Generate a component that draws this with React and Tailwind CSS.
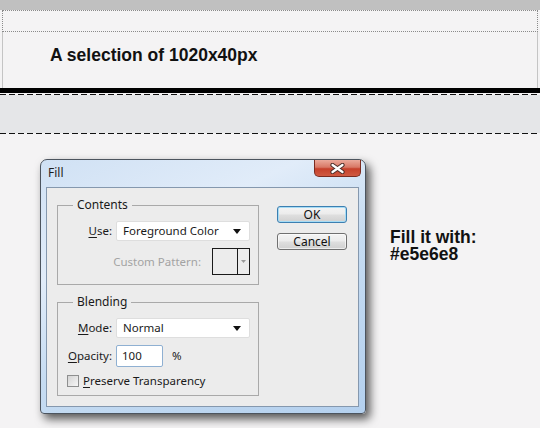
import React from "react";

function DashLine() {
  return <div className="h-[1px] bg-[repeating-linear-gradient(90deg,#111_0_6px,transparent_6px_9px)]" />;
}

function Select({ children }) {
  return (
    <div className="ml-[4px] w-[134px] h-[20px] bg-white border border-[#dedede] rounded-[2px] flex items-center justify-between pl-[6px] pr-[8px]">
      <span className="leading-[16px]">{children}</span>
      <svg width="8" height="5" viewBox="0 0 8 5">
        <path d="M0 0h8L4 5z" fill="#111" />
      </svg>
    </div>
  );
}

const btnBase =
  "w-[70px] h-[17px] rounded-[3px] flex items-center justify-center text-[12px] leading-[14px] text-[#111] bg-[linear-gradient(#f4f4f4,#ececec_45%,#dedede_55%,#d0d0d0)]";

export default function App() {
  return (
    <div className="w-[540px] h-[428px] overflow-hidden bg-[#f4f3f4] font-['Liberation_Sans',Arial,sans-serif]">
      <div className="h-[10px] bg-[#c0c0c0]" />
      <div className="px-[2px]">
        <div className="h-[22px] border border-dotted border-[#8a8a8a]" />
        <div className="h-[56px] border-x border-[#c4c4c4] pl-[47px] pt-[13px] text-[17.5px] leading-[20px] font-bold text-[#111]">
          A selection of 1020x40px
        </div>
      </div>
      <div className="h-[5px] bg-black" />
      <div className="h-[1px]" />
      <DashLine />
      <div className="h-[38px] bg-[#e5e6e8]" />
      <DashLine />

      <div className="flex items-start">
        {/* Dialog */}
        <div className="ml-[40px] mt-[25px] w-[326px] h-[255px] shrink-0 rounded-t-[7px] rounded-b-[4px] border border-[#4c545e] bg-[linear-gradient(155deg,#d0e1f4_0%,#e1ecf9_30%,#c6dcf2_55%,#b4d0ee_100%)] shadow-[4px_5px_10px_rgba(0,0,0,0.65)] flex flex-col font-['Noto_Sans',sans-serif] text-[11.5px] text-[#1a1a1a]">
          <div className="h-[27px] flex justify-between items-start">
            <div className="pl-[7px] pt-[5px] text-[12px] leading-[16px] text-[#1e1e1e]">Fill</div>
            <div className="mr-[4px] w-[47px] h-[17px] rounded-b-[5px] border border-t-0 border-[#7a2b20] bg-[linear-gradient(#eba99b,#d87866_45%,#c6402b_55%,#cf5a42)] flex items-center justify-center">
              <svg width="15" height="11" viewBox="0 0 15 11">
                <path d="M2.5 2 L12.5 9 M12.5 2 L2.5 9" stroke="#4a2c28" strokeWidth="4.2" strokeLinecap="round" />
                <path d="M2.5 2 L12.5 9 M12.5 2 L2.5 9" stroke="#ffffff" strokeWidth="2.3" strokeLinecap="round" />
              </svg>
            </div>
          </div>
          <div className="ml-[5px] w-[313px] h-[220px] border border-[#8598ae] bg-[#ececec] flex items-start">
            {/* Left column */}
            <div className="ml-[10px] mt-[9px] w-[202px] flex flex-col">
              <fieldset className="w-[202px] border border-[#a9a9a9] pb-[9px]">
                <legend className="ml-[15px] px-[4px] text-[12px] leading-[16px]">Contents</legend>
                <div className="mt-[8px] flex items-center">
                  <div className="w-[54px] text-right leading-[16px]">
                    <u className="underline-offset-2">U</u>se:
                  </div>
                  <Select>Foreground Color</Select>
                </div>
                <div className="mt-[7px] w-[192px] flex items-center justify-end">
                  <span className="text-[#a3a3a3] leading-[16px]">Custom Pattern:</span>
                  <div className="ml-[11px] w-[38px] h-[27px] border border-[#1a1a1a] flex">
                    <div className="flex-1" />
                    <div className="w-[12px] border-l border-[#1a1a1a] flex items-center justify-center">
                      <svg width="5" height="3" viewBox="0 0 5 3">
                        <path d="M0 0h5L2.5 3z" fill="#9a9a9a" />
                      </svg>
                    </div>
                  </div>
                </div>
              </fieldset>
              <fieldset className="mt-[9px] w-[202px] border border-[#a9a9a9] pb-[8px]">
                <legend className="ml-[15px] px-[4px] text-[12px] leading-[16px]">Blending</legend>
                <div className="mt-[8px] flex items-center">
                  <div className="w-[54px] text-right leading-[16px]">
                    <u className="underline-offset-2">M</u>ode:
                  </div>
                  <Select>Normal</Select>
                </div>
                <div className="mt-[7px] flex items-center">
                  <div className="w-[54px] text-right leading-[16px]">
                    <u className="underline-offset-2">O</u>pacity:
                  </div>
                  <div className="ml-[4px] w-[47px] h-[22px] bg-white border border-[#8fb0d2] rounded-[2px] flex items-center pl-[5px] leading-[16px]">
                    100
                  </div>
                  <span className="ml-[9px] leading-[16px]">%</span>
                </div>
                <div className="mt-[8px] flex items-center h-[12px]">
                  <div className="ml-[9px] w-[12px] h-[12px] border border-[#8e8f8f] bg-[linear-gradient(135deg,#d4d4d4,#f6f6f6)]" />
                  <span className="ml-[4px] leading-[16px]">
                    <u className="underline-offset-2">P</u>reserve Transparency
                  </span>
                </div>
              </fieldset>
            </div>
            {/* Right column */}
            <div className="ml-[18px] mt-[18px] flex flex-col gap-[10px]">
              <div className={btnBase + " border border-[#3c7fb1] shadow-[inset_0_0_0_1px_#a6dcf5]"}>OK</div>
              <div className={btnBase + " border border-[#707070] shadow-[inset_0_0_0_1px_rgba(255,255,255,0.6)]"}>Cancel</div>
            </div>
          </div>
        </div>

        <div className="ml-[24px] mt-[95px] text-[17.5px] leading-[17px] font-bold text-[#111]">
          <div>Fill it with:</div>
          <div>#e5e6e8</div>
        </div>
      </div>
    </div>
  );
}
